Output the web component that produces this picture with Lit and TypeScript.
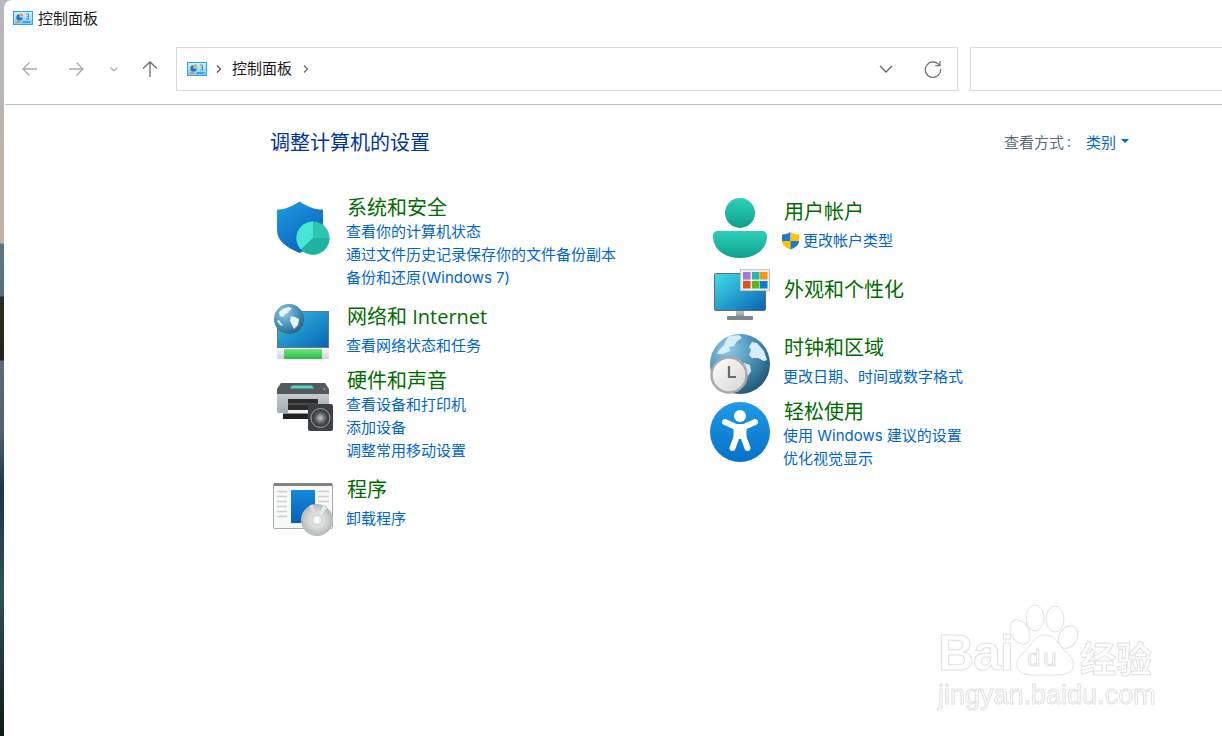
import { LitElement, html, css, svg } from "lit";
import { customElement } from "lit/decorators.js";
import { styleMap } from "lit/directives/style-map.js";

const cpIcon = html`<svg class="cp" width="20" height="14" viewBox="0 0 20 14">
  <defs><linearGradient id="cpg" x1="0" y1="0" x2="0" y2="1"><stop offset="0" stop-color="#d4f0fd"/><stop offset="1" stop-color="#7fcdf5"/></linearGradient></defs>
  <rect x=".5" y=".5" width="19" height="13" fill="url(#cpg)" stroke="#2aa4ea"/>
  <path d="M6.500 3.200a3.200 3.200 0 1 0 3.200 3.200H6.500z" fill="#2a73c4"/>
  <path d="M7.200 2.300a3 3 0 0 1 3 3H7.200z" fill="#f29a1f"/>
  <path d="M13 3h2.500M15.500 3v2.500h-1.500M15.500 5.500v2.500h-2.500" fill="none" stroke="#3f7aa8" stroke-width=".8"/>
  <path d="M2.500 11h5" stroke="#f0861a" stroke-width="1.400"/>
  <path d="M9.500 11h8" stroke="#1f78cc" stroke-width="1.200"/>
</svg>`;

const shield = svg`<svg width="62" height="62" viewBox="0 0 62 62">
  <defs>
    <linearGradient id="sh" x1="0" y1="0" x2="0.6" y2="1"><stop offset="0" stop-color="#1f9be4"/><stop offset="1" stop-color="#0b63bd"/></linearGradient>
  </defs>
  <path d="M6 9.500C14 9.500 20 7 28.500 1.500C37 7 43 9.500 52 9.500V30C52 41 42 47 28.500 53C15 47 6 41 6 30Z" fill="url(#sh)"/>
  <circle cx="42" cy="38" r="16.500" fill="#2cc4b2"/>
  <path d="M42 38V21.500A16.500 16.500 0 0 0 30 49.500Z" fill="#45e6d6"/>
  <path d="M42 38L30 49.500A16.500 16.500 0 0 0 58.500 38Z" fill="#1fb2a0"/>
</svg>`;

const network = svg`<svg width="62" height="62" viewBox="0 0 62 62">
  <defs>
    <linearGradient id="scr" x1="0" y1="0" x2="1" y2="1"><stop offset="0" stop-color="#33c3e6"/><stop offset="1" stop-color="#0a62b4"/></linearGradient>
    <radialGradient id="glb" cx=".35" cy=".3" r=".85"><stop offset="0" stop-color="#8ccbe8"/><stop offset=".6" stop-color="#3f88b0"/><stop offset="1" stop-color="#234f6c"/></radialGradient>
    <linearGradient id="grn" x1="0" y1="0" x2="0" y2="1"><stop offset="0" stop-color="#6be878"/><stop offset="1" stop-color="#2fb64c"/></linearGradient>
    <linearGradient id="wht" x1="0" y1="0" x2="0" y2="1"><stop offset="0" stop-color="#f4f6f6"/><stop offset="1" stop-color="#cfd3d3"/></linearGradient>
  </defs>
  <rect x="6.500" y="8.500" width="51" height="36" fill="url(#scr)" stroke="#6a7680"/>
  <rect x="6" y="46" width="52" height="10" rx="1" fill="url(#wht)"/>
  <rect x="13" y="46" width="38" height="10" fill="url(#grn)"/>
  <circle cx="18" cy="16" r="15" fill="url(#glb)"/>
  <path d="M9 8c3-3 7-4 10-4l2 2-3 2-1 2-3 1-2 3-3-1-1-3zM20 13l4 1 4 2-1 6-4 4-2-4-2-4zM6 18l2-1 2 3 2 3-3-1z" fill="#e6f3f8"/>
</svg>`;

const printer = svg`<svg width="62" height="50" viewBox="0 0 62 50">
  <defs>
    <linearGradient id="pb" x1="0" y1="0" x2="0" y2="1"><stop offset="0" stop-color="#c8ced2"/><stop offset="1" stop-color="#a5acb0"/></linearGradient>
    <radialGradient id="sp" cx=".5" cy=".5" r=".5"><stop offset="0" stop-color="#c4c8c8"/><stop offset=".7" stop-color="#5a5e60"/><stop offset="1" stop-color="#3a3c3e"/></radialGradient>
  </defs>
  <path d="M6 9h52v20a2 2 0 0 1-2 2H8a2 2 0 0 1-2-2z" fill="url(#pb)"/>
  <path d="M10 1H54L58 7V12H6V7z" fill="#55595d"/>
  <path d="M21 3.500H41L43 6.500H19z" fill="#4ed8c6"/>
  <circle cx="53.500" cy="7" r="1" fill="#45d24a"/>
  <rect x="17" y="17" width="30" height="11" fill="#2c2c2c"/>
  <rect x="17" y="21" width="30" height="2" fill="#4a4a4a"/>
  <rect x="17" y="28" width="20" height="3.500" fill="#f2f2f2"/>
  <rect x="12" y="31.500" width="25" height="5.500" fill="#202020"/>
  <rect x="37" y="22" width="25" height="27" rx="2" fill="#3e4043"/>
  <circle cx="49.500" cy="36" r="9.500" fill="none" stroke="#9da1a3" stroke-width="1"/>
  <circle cx="49.500" cy="36" r="7.500" fill="url(#sp)"/>
</svg>`;

const programs = svg`<svg width="63" height="56" viewBox="0 0 63 56">
  <defs>
    <linearGradient id="pblue" x1="0" y1="0" x2="0" y2="1"><stop offset="0" stop-color="#1488dd"/><stop offset="1" stop-color="#0960b8"/></linearGradient>
    <radialGradient id="cd" cx=".5" cy=".5" r=".5"><stop offset="0" stop-color="#f4f4f4"/><stop offset=".5" stop-color="#d8dada"/><stop offset="1" stop-color="#b4b8b8"/></radialGradient>
  </defs>
  <rect x="2.500" y="2.500" width="59" height="45" rx="1" fill="#f7f8f8" stroke="#a9a9a9"/>
  <rect x="3" y="2" width="58" height="3" fill="#85827c"/>
  <rect x="20" y="9" width="24" height="33" fill="url(#pblue)"/>
  <path d="M6 10.500h10M6 15.500h10M6 20.500h10M6 25.500h10M6 30.500h10M6 35.500h10M47 10.500h11M47 15.500h11M47 20.500h11M48 25.500h8" stroke="#cfcfcf" stroke-width="1.500"/>
  <circle cx="46" cy="39" r="16" fill="url(#cd)"/>
  <path d="M46 39L38 25A16 16 0 0 1 42 23.500Z" fill="#e8d4ec"/>
  <path d="M46 39L56 27A16 16 0 0 0 52 24.500Z" fill="#dff0dc"/>
  <circle cx="46" cy="39" r="5" fill="#eef0f0" stroke="#c8caca"/>
  <circle cx="46" cy="39" r="2" fill="#fff"/>
</svg>`;

const user = svg`<svg width="62" height="62" viewBox="0 0 62 62">
  <defs><linearGradient id="ut" x1="0" y1="0" x2="0" y2="1"><stop offset="0" stop-color="#2bd0b8"/><stop offset="1" stop-color="#10a08c"/></linearGradient></defs>
  <circle cx="31" cy="15" r="15" fill="url(#ut)"/>
  <path d="M9 33h44c3 0 5 2 5 5C58 51 47 60 31 60S4 51 4 38c0-3 2-5 5-5z" fill="url(#ut)"/>
</svg>`;

const uacShield = svg`<svg class="uac" width="19" height="19" viewBox="0 0 19 19">
  <path d="M9.500 1C6.500 2.800 4 3.500 1 3.500V10h8.500z" fill="#1a78d2"/>
  <path d="M9.500 1c3 1.800 5.500 2.500 8.500 2.500V10H9.500z" fill="#ffc400"/>
  <path d="M1 10h8.500v8.500C4.500 16.800 1 14 1 10z" fill="#ffc400"/>
  <path d="M9.500 10H18c0 4-3.500 6.800-8.500 8.500z" fill="#1a78d2"/>
</svg>`;

const appearance = svg`<svg width="62" height="54" viewBox="0 0 62 54">
  <defs><linearGradient id="ap" x1="0" y1="0" x2="1" y2="1"><stop offset="0" stop-color="#40dfe8"/><stop offset="1" stop-color="#0a62b4"/></linearGradient>
  <linearGradient id="apb" x1="0" y1="0" x2="0" y2="1"><stop offset="0" stop-color="#bcc8cc"/><stop offset="1" stop-color="#8e9aa0"/></linearGradient></defs>
  <rect x="5.500" y="5.500" width="51" height="37" rx="1.500" fill="url(#ap)" stroke="#636a70"/>
  <rect x="27" y="43" width="8" height="5" fill="url(#apb)"/>
  <rect x="18" y="48" width="26" height="4" rx="1" fill="#7f878b"/>
  <rect x="31.500" y="1.500" width="29" height="21" fill="#eeeeee" stroke="#c4c4c4"/>
  <rect x="34" y="4" width="7.500" height="7.500" fill="#a678d8"/>
  <rect x="43" y="4" width="7.500" height="7.500" fill="#2ab6a6"/>
  <rect x="51" y="4" width="7.500" height="7.500" fill="#f2960e"/>
  <rect x="34" y="13" width="7.500" height="7.500" fill="#e5511a"/>
  <rect x="43" y="13" width="7.500" height="7.500" fill="#58b81a"/>
  <rect x="51" y="13" width="7.500" height="7.500" fill="#0a7ad8"/>
</svg>`;

const clock = svg`<svg width="62" height="62" viewBox="0 0 62 62">
  <defs>
    <radialGradient id="gl2" cx=".3" cy=".25" r=".95"><stop offset="0" stop-color="#8ccbe8"/><stop offset=".55" stop-color="#3f86ad"/><stop offset="1" stop-color="#17405a"/></radialGradient>
    <linearGradient id="fc" x1="0" y1="0" x2="1" y2="1"><stop offset="0" stop-color="#ffffff"/><stop offset="1" stop-color="#d4d4d4"/></linearGradient>
  </defs>
  <circle cx="31" cy="31" r="30" fill="url(#gl2)"/>
  <path d="M20 3l10-1 3 3-5 3-3 5-5 1 1 4-7 3-6 0 2-4 5-5 2-5zM43 9l5 1 7 8 3 9-3 1-6-3-6 0-3-3 2-5-2-3zM35 30l6 2 1 6-3 5-3-4-2-5z" fill="#d8edf6"/>
  <circle cx="20" cy="42" r="17.500" fill="url(#fc)" stroke="#a9a9a9" stroke-width="2.500"/>
  <path d="M20 33V44H27" fill="none" stroke="#6a6a6a" stroke-width="2.200"/>
</svg>`;

const access = svg`<svg width="62" height="62" viewBox="0 0 62 62">
  <defs><linearGradient id="ac" x1="0" y1="0" x2="0" y2="1"><stop offset="0" stop-color="#1f9be8"/><stop offset="1" stop-color="#0670c8"/></linearGradient></defs>
  <circle cx="31" cy="31" r="30" fill="url(#ac)"/>
  <circle cx="31" cy="15" r="6" fill="#fff"/>
  <path d="M16 21l11 5h8l11-5" fill="none" stroke="#fff" stroke-width="6" stroke-linecap="round" stroke-linejoin="round"/>
  <path d="M27.500 27v9l-4 11M34.500 27v9l4 11" fill="none" stroke="#fff" stroke-width="6" stroke-linecap="round" stroke-linejoin="round"/>
  <rect x="26" y="25" width="10" height="13" fill="#fff"/>
</svg>`;

interface Sec { title: string; icon: unknown; top: number; gap: number; links: string[]; iconTop: number; shield?: boolean; }

const left: Sec[] = [
  { title: "系统和安全", icon: shield, top: 1, gap: -2, iconTop: 6, links: ["查看你的计算机状态", "通过文件历史记录保存你的文件备份副本", "备份和还原(Windows 7)"] },
  { title: "网络和 Internet", icon: network, top: 14, gap: 3, iconTop: 0, links: ["查看网络状态和任务"] },
  { title: "硬件和声音", icon: printer, top: 10, gap: -2, iconTop: 15, links: ["查看设备和打印机", "添加设备", "调整常用移动设置"] },
  { title: "程序", icon: programs, top: 14, gap: 3, iconTop: 5, links: ["卸载程序"] },
];
const right: Sec[] = [
  { title: "用户帐户", icon: user, top: 5, gap: 3, iconTop: 0, shield: true, links: ["更改帐户类型"] },
  { title: "外观和个性化", icon: appearance, top: 24, gap: 0, iconTop: -8, links: [] },
  { title: "时钟和区域", icon: clock, top: 30, gap: 3, iconTop: -1, links: ["更改日期、时间或数字格式"] },
  { title: "轻松使用", icon: access, top: 10, gap: -2, iconTop: 3, links: ["使用 Windows 建议的设置", "优化视觉显示"] },
];

@customElement("app-root")
export class AppRoot extends LitElement {
  static styles = css`
    :host { display: block; width: 1222px; height: 736px; overflow: hidden; position: relative;
      font-family: "Open Sans", "Noto Sans CJK SC", sans-serif; font-size: 15px;
      background: linear-gradient(#b6b8ba 0, #bfb2a8 243px, #5d7686 244px, #54707f 296px, #2a2a22 297px, #26241e 360px, #5c6a76 361px, #4f6474 430px, #1c3448 490px, #2f5359 590px, #101815 736px); }
    .win { position: absolute; left: 4px; top: 0; right: 0; bottom: 0; background: #fff; border-top-left-radius: 8px; display: flex; flex-direction: column; }
    .title { height: 36px; display: flex; align-items: center; padding-left: 9px; gap: 5px; color: #1a1a1a; line-height: 20px; }
    .cp { display: block; flex: none; }
    .bar { height: 69px; margin-left: 1px; border-bottom: 1px solid #bdbdbd; display: flex; align-items: flex-start; padding-top: 11px; box-sizing: border-box; }
    .navs { width: 171px; height: 44px; display: flex; flex: none; align-items: center; }
    .navs svg { display: block; flex: none; }
    .nb { margin-left: 15px; }
    .nf { margin-left: 26px; }
    .nd { margin-left: 23px; }
    .nu { margin-left: 21px; }
    .addr { width: 782px; height: 44px; flex: none; box-sizing: border-box; border: 1px solid #d9d9d9; display: flex; align-items: center; padding-left: 10px; color: #1a1a1a; }
    .addr .path { display: flex; align-items: center; flex: 1; }
    .crumb { margin: 0 10px 2px 9px; line-height: 20px; }
    .addr svg { display: block; flex: none; }
    .sep1 { margin-left: 8px; }
    .refresh { margin: 0 15px 0 30px; }
    .search { margin-left: 12px; flex: 1; height: 44px; box-sizing: border-box; border: 1px solid #d9d9d9; border-right: 0; }
    .main { flex: 1; padding: 23px 93px 0 267px; }
    .head { display: flex; justify-content: space-between; align-items: center; height: 30px; }
    h1 { margin: 0 0 0 -1px; font-size: 20px; font-weight: 400; color: #003399; line-height: 30px; }
    .view { display: flex; align-items: center; color: #5a6b7b; padding-bottom: 4px; }
    .colon { margin-left: 3px; }
    .view a { margin-left: 15px; color: #0066cc; display: flex; align-items: center; gap: 5px; }
    .tri { width: 0; height: 0; border: 4px solid transparent; border-top-color: #0066cc; border-bottom: 0; display: block; }
    .cols { display: grid; grid-template-columns: 438px 1fr; margin-top: 35px; }
    .sec { display: flex; }
    .ic { width: 75px; height: 0; flex: none; }
    .ic svg { display: block; }
    .r .ic { width: 74px; }
    h2 { margin: 0 0 0 1px; font-size: 20px; font-weight: 400; color: #006c00; line-height: 28px; height: 28px; }
    .lk { display: flex; flex-direction: column; font-family: "Inter", "Noto Sans CJK SC", sans-serif; }
    .lk a { color: #0066cc; line-height: 23px; height: 23px; white-space: nowrap; display: flex; align-items: center; }
    .uac { display: block; margin-left: -2px; margin-right: 3px; flex: none; }
    .wm { position: absolute; left: 934px; top: 605px; width: 224px; height: 110px; color: #fff; filter: blur(.4px); }
    .wm svg { position: absolute; left: 0; top: 0; }
    .wm span { position: absolute; -webkit-text-stroke: 1px #e0e0e0; font-family: "Liberation Sans", sans-serif; white-space: nowrap; }
    .wm .bai { left: 0; top: 23px; font-size: 50px; font-weight: 700; line-height: 50px; letter-spacing: -1px; }
    .wm .du { left: 89px; top: 41px; font-size: 24px; line-height: 24px; letter-spacing: 3px; }
    .wm .jy { left: 142px; top: 28px; font-size: 36px; line-height: 48px; font-weight: 700; font-family: "Noto Sans CJK SC", sans-serif; }
    .wm .url { left: 0; top: 75px; font-size: 27px; line-height: 30px; }
  `;

  private sec(s: Sec) {
    return html`<div class="sec" style=${styleMap({ marginTop: s.top + "px" })}>
      <div class="ic">
        <div style=${styleMap({ marginTop: s.iconTop + "px" })}>${s.icon}</div>
      </div>
      <div>
        <h2>${s.title}</h2>
        ${s.links.length ? html`<div class="lk" style=${styleMap({ marginTop: s.gap + "px" })}>
          ${s.links.map((l) => html`<a>${s.shield ? uacShield : ""}${l}</a>`)}
        </div>` : ""}
      </div>
    </div>`;
  }

  render() {
    return html`<div class="win">
      <div class="title">${cpIcon}<span>控制面板</span></div>
      <div class="bar">
        <div class="navs">
          <svg class="nb" width="20" height="20" viewBox="0 0 20 20" fill="none" stroke="#a9a9a9" stroke-width="1.300"><path d="M17 10H3M9.500 3.500L3 10l6.500 6.500"/></svg>
          <svg class="nf" width="20" height="20" viewBox="0 0 20 20" fill="none" stroke="#a9a9a9" stroke-width="1.300"><path d="M3 10h14M10.500 3.500L17 10l-6.500 6.500"/></svg>
          <svg class="nd" width="10" height="10" viewBox="0 0 10 10" fill="none" stroke="#a9a9a9" stroke-width="1.100"><path d="M1.500 3.500L5 7l3.500-3.500"/></svg>
          <svg class="nu" width="20" height="20" viewBox="0 0 20 20" fill="none" stroke="#6e6e6e" stroke-width="1.300"><path d="M10 18V3M3 9.500L10 3l7 6.500"/></svg>
        </div>
        <div class="addr">
          <div class="path">
            ${cpIcon}
            <svg class="sep1" width="8" height="10" viewBox="0 0 8 10" fill="none" stroke="#555" stroke-width="1.300"><path d="M2 1.500L5.500 5 2 8.500"/></svg>
            <span class="crumb">控制面板</span>
            <svg width="8" height="10" viewBox="0 0 8 10" fill="none" stroke="#666" stroke-width="1.300"><path d="M2 1.500L5.500 5 2 8.500"/></svg>
          </div>
          <svg width="16" height="10" viewBox="0 0 16 10" fill="none" stroke="#666" stroke-width="1.300"><path d="M2 2l6 6 6-6"/></svg>
          <svg class="refresh" width="18" height="18" viewBox="0 0 18 18" fill="none" stroke="#777" stroke-width="1.300"><path d="M15.500 5.500A7.700 7.700 0 1 0 16.700 9M16 1v4.700h-4.700"/></svg>
        </div>
        <div class="search"></div>
      </div>
      <div class="main">
        <div class="head">
          <h1>调整计算机的设置</h1>
          <div class="view">查看方式<span class="colon">:</span><a>类别<i class="tri"></i></a></div>
        </div>
        <div class="cols">
          <div>${left.map((s) => this.sec(s))}</div>
          <div class="r">${right.map((s) => this.sec(s))}</div>
        </div>
      </div>
      <div class="wm">
        <svg width="224" height="110" viewBox="0 0 224 110" fill="#fff" stroke="#e0e0e0">
          <ellipse cx="82" cy="27" rx="9" ry="13" transform="rotate(-30 82 27)"/>
          <ellipse cx="97" cy="13" rx="9" ry="13"/>
          <ellipse cx="117" cy="14" rx="9" ry="13"/>
          <ellipse cx="130" cy="32" rx="9" ry="12" transform="rotate(30 130 32)"/>
          <path d="M107 30C118 30 120 40 128 47C134 52 136 57 135 62C133 69 125 71 107 70C89 71 81 69 79 62C78 57 80 52 86 47C94 40 96 30 107 30Z"/>
        </svg>
        <span class="bai">Bai</span><span class="du">du</span><span class="jy">经验</span><span class="url">jingyan.baidu.com</span>
      </div>
    </div>`;
  }
}
